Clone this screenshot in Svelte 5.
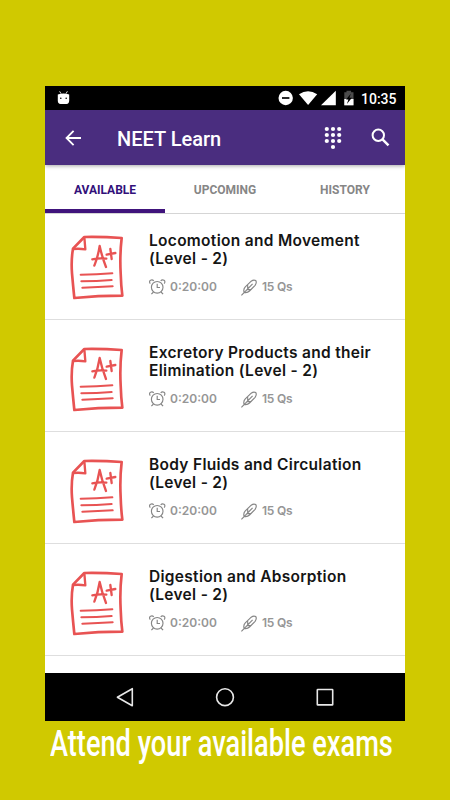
<script lang="ts">
	const tabs = ['Available', 'Upcoming', 'History'];

	const exams = [
		{ title: ['Locomotion and Movement', '(Level - 2)'], time: '0:20:00', questions: 15 },
		{ title: ['Excretory Products and their', 'Elimination (Level - 2)'], time: '0:20:00', questions: 15 },
		{ title: ['Body Fluids and Circulation', '(Level - 2)'], time: '0:20:00', questions: 15 },
		{ title: ['Digestion and Absorption', '(Level - 2)'], time: '0:20:00', questions: 15 }
	];

	let active = $state(0);
</script>

<main>
	<div class="phone">
		<div class="status">
			<svg class="droid" width="13" height="14" viewBox="0 0 13 14">
				<path d="M2.6.3 4 2.6M10.4.3 9 2.6" stroke="#ddd" stroke-width="1" />
				<path d="M.8 3.4Q6.5 1.4 12.2 3.4V9.5Q12.2 12.9 9.5 12.9H3.5Q.8 12.9.8 9.5Z" fill="#fff" />
				<circle cx="3.8" cy="7.2" r=".8" />
				<circle cx="9.2" cy="7.2" r=".8" />
			</svg>
			<svg class="signals" width="78" height="16" viewBox="0 0 78 16">
				<circle cx="7.7" cy="8" r="7.2" fill="#fff" />
				<path d="M4 8h7.4" stroke="#000" stroke-width="1.7" />
				<path d="M21 4.2Q30 -1.8 39.2 4.2L30.1 15Z" fill="#fff" />
				<path d="M57.8.8V15.3H43Z" fill="#fff" />
				<path d="M66.3 2.2h2.2V.8h4.6v1.4h2.4v13.1h-9.2z" fill="#4c4c4c" />
				<path d="M66.3 9h9.2v6.3h-9.2z" fill="#fff" />
				<path d="M72.8 3.8 68 9.4h2.4l-1.5 4.5 5-6.2h-2.5z" fill="#000" />
			</svg>
			<span class="clock">10:35</span>
		</div>

		<header>
			<svg class="back" width="18" height="18" viewBox="0 0 18 18">
				<path d="M16 9H2M8.6 1.8 1.5 9l7.1 7.2" fill="none" stroke="#fff" stroke-width="1.8" />
			</svg>
			<h1>NEET Learn</h1>
			<svg class="dialpad" width="18" height="24" viewBox="0 0 18 24" fill="#fff">
				{#each [2.8, 9, 15.2] as x}
					{#each [3, 9, 15] as y}
						<circle cx={x} cy={y} r="2.1" />
					{/each}
				{/each}
				<circle cx="9" cy="21" r="2.1" />
			</svg>
			<svg class="search" width="19" height="19" viewBox="0 0 19 19" fill="none" stroke="#fff">
				<circle cx="7.3" cy="7.2" r="5.7" stroke-width="2" />
				<path d="m11.5 11.4 6 6" stroke-width="2.5" />
			</svg>
		</header>

		<nav class="tabs">
			{#each tabs as tab, i}
				<button class:active={active === i} onclick={() => (active = i)}>{tab}</button>
			{/each}
		</nav>

		<ul>
			{#each exams as exam}
				<li>
					<svg class="paper" width="54" height="65" viewBox="30 30 162 195" fill="none" stroke="#e85353">
						<path
							d="M73 36Q130 35 185 39Q179 90 182 145Q183 180 187 212Q115 212 43 219Q39 180 36 145Q33 105 39 71Z"
							stroke-width="8"
							stroke-linejoin="round"
						/>
						<path d="M73 36 76 73Q58 70 39 72" stroke-width="7" stroke-linejoin="round" />
						<path
							d="M103 122Q114 95 119 63Q125 92 138 126M97 103Q115 99 139 101M140 89 166 84M151 72 155 102"
							stroke-width="7"
							stroke-linecap="round"
							stroke-linejoin="round"
						/>
						<path
							d="M62 149Q110 149 157 145M64 169Q110 169 155 165M67 188Q115 187 158 184"
							stroke-width="6"
							stroke-linecap="round"
						/>
					</svg>
					<div class="info">
						<h2>
							{#each exam.title as line}
								<span>{line}</span>
							{/each}
						</h2>
						<div class="meta">
							<svg class="alarm" width="17" height="16" viewBox="0 0 17 16" fill="none" stroke="#858585" stroke-width="1.15">
								<circle cx="8.2" cy="8.3" r="5.8" />
								<path d="M8.2 4.8v3.7H11M4.5 13 2.4 15.2M12 13l2.1 2.2M1.3 4.6Q-.3 2.5 1.5 1.3Q3.2.1 4.8 1.8M15.2 4.6Q16.7 2.5 15 1.3Q13.2.1 11.7 1.8" />
							</svg>
							<span class="time">{exam.time}</span>
							<svg class="feather" width="16" height="17" viewBox="0 0 16 17" fill="none" stroke="#858585" stroke-width="1.15">
								<path d="M.4 16.3 11.6 4.8M3.1 13.4Q2.1 10.2 4.3 7.9L10.2 2.2Q12.6.4 14.8 1.6Q16 3.8 14.1 6.3L8.5 12Q6.3 14.2 3.1 13.4M6.7 9.8V6.2M6.2 10.6h3.5" />
							</svg>
							<span class="count">{exam.questions} Qs</span>
						</div>
					</div>
				</li>
			{/each}
		</ul>

		<div class="keys">
			<svg width="20" height="20" viewBox="0 0 20 20">
				<path d="M17.3 1.7v17L2.4 10.2Z" />
			</svg>
			<svg width="20" height="20" viewBox="0 0 20 20">
				<circle cx="10" cy="10.2" r="8.4" />
			</svg>
			<svg width="20" height="20" viewBox="0 0 20 20">
				<rect x="2.3" y="2.5" width="15.4" height="15.4" rx=".5" />
			</svg>
		</div>
	</div>

	<p class="caption"><span>Attend your available exams</span></p>
</main>

<style>
	:global(body) {
		margin: 0;
		background: #d0c900;
	}

	main {
		box-sizing: border-box;
		width: 450px;
		height: 800px;
		padding: 86px 45px 0;
		overflow: hidden;
		background: #d0c900;
		font-family: Roboto, sans-serif;
	}

	.phone {
		display: flex;
		flex-direction: column;
		height: 635px;
		background: #fff;
	}

	.status {
		display: flex;
		flex: none;
		align-items: center;
		height: 24px;
		padding: 0 8px 0 12px;
		background: #000;
		color: #fff;
	}

	.signals {
		margin-left: auto;
	}

	.clock {
		width: 36px;
		margin-left: 5px;
		padding-top: 2px;
		font-size: 14px;
		font-weight: 500;
		line-height: 22px;
	}

	header {
		z-index: 1;
		display: flex;
		flex: none;
		align-items: center;
		height: 55px;
		padding: 0 15px 0 20px;
		background: #4a2d7f;
		box-shadow: 0 1px 4px rgba(0, 0, 0, 0.35);
		clip-path: inset(0 0 -8px);
		color: #fff;
	}

	h1 {
		margin: 3px auto 0 34px;
		font-size: 20px;
		font-weight: 500;
		line-height: 24px;
	}

	.dialpad {
		margin-right: 29px;
	}

	.tabs {
		display: flex;
		flex: none;
		box-sizing: border-box;
		height: 49px;
		border-bottom: 1px solid #d5d5d5;
	}

	.tabs button {
		flex: 1;
		padding: 6px 0 0;
		border: 0;
		border-bottom: 4px solid transparent;
		background: none;
		color: #868686;
		font: 700 12px Roboto, sans-serif;
		text-transform: uppercase;
	}

	.tabs button.active {
		border-color: #40147c;
		color: #32107a;
	}

	ul {
		flex: 1;
		margin: 0;
		padding: 0;
		list-style: none;
	}

	li {
		display: flex;
		box-sizing: border-box;
		height: 112px;
		padding: 24px 0 0 25px;
		border-bottom: 1px solid #dedede;
	}

	li:first-child {
		height: 106px;
		padding-top: 18px;
	}

	.paper {
		margin-top: 3px;
	}

	.info {
		margin-left: 25px;
	}

	h2 {
		margin: 0;
		color: #151515;
		font: 600 15.5px/18px Inter, sans-serif;
		letter-spacing: 0.3px;
	}

	h2 span {
		display: block;
		white-space: nowrap;
	}

	.meta {
		display: flex;
		align-items: center;
		height: 18px;
		margin-top: 10px;
		color: #969696;
		font: 600 12px/18px Inter, sans-serif;
	}

	.time {
		width: 67px;
		margin-left: 4px;
	}

	.feather {
		margin-left: 4px;
	}

	.count {
		margin-left: 5px;
		letter-spacing: -0.2px;
	}

	.keys {
		display: flex;
		flex: none;
		align-items: center;
		justify-content: center;
		gap: 80px;
		height: 48px;
		background: #000;
	}

	.keys svg {
		fill: none;
		stroke: #e8e8e8;
		stroke-width: 1.6;
		stroke-linejoin: round;
	}

	.caption {
		margin: 0 0 0 5px;
		color: #fff;
		font-size: 37px;
		font-weight: 500;
		line-height: 46px;
		white-space: nowrap;
	}

	/* condensed poster lettering */
	.caption span {
		display: inline-block;
		transform: scaleX(0.735);
		transform-origin: left;
	}
</style>
